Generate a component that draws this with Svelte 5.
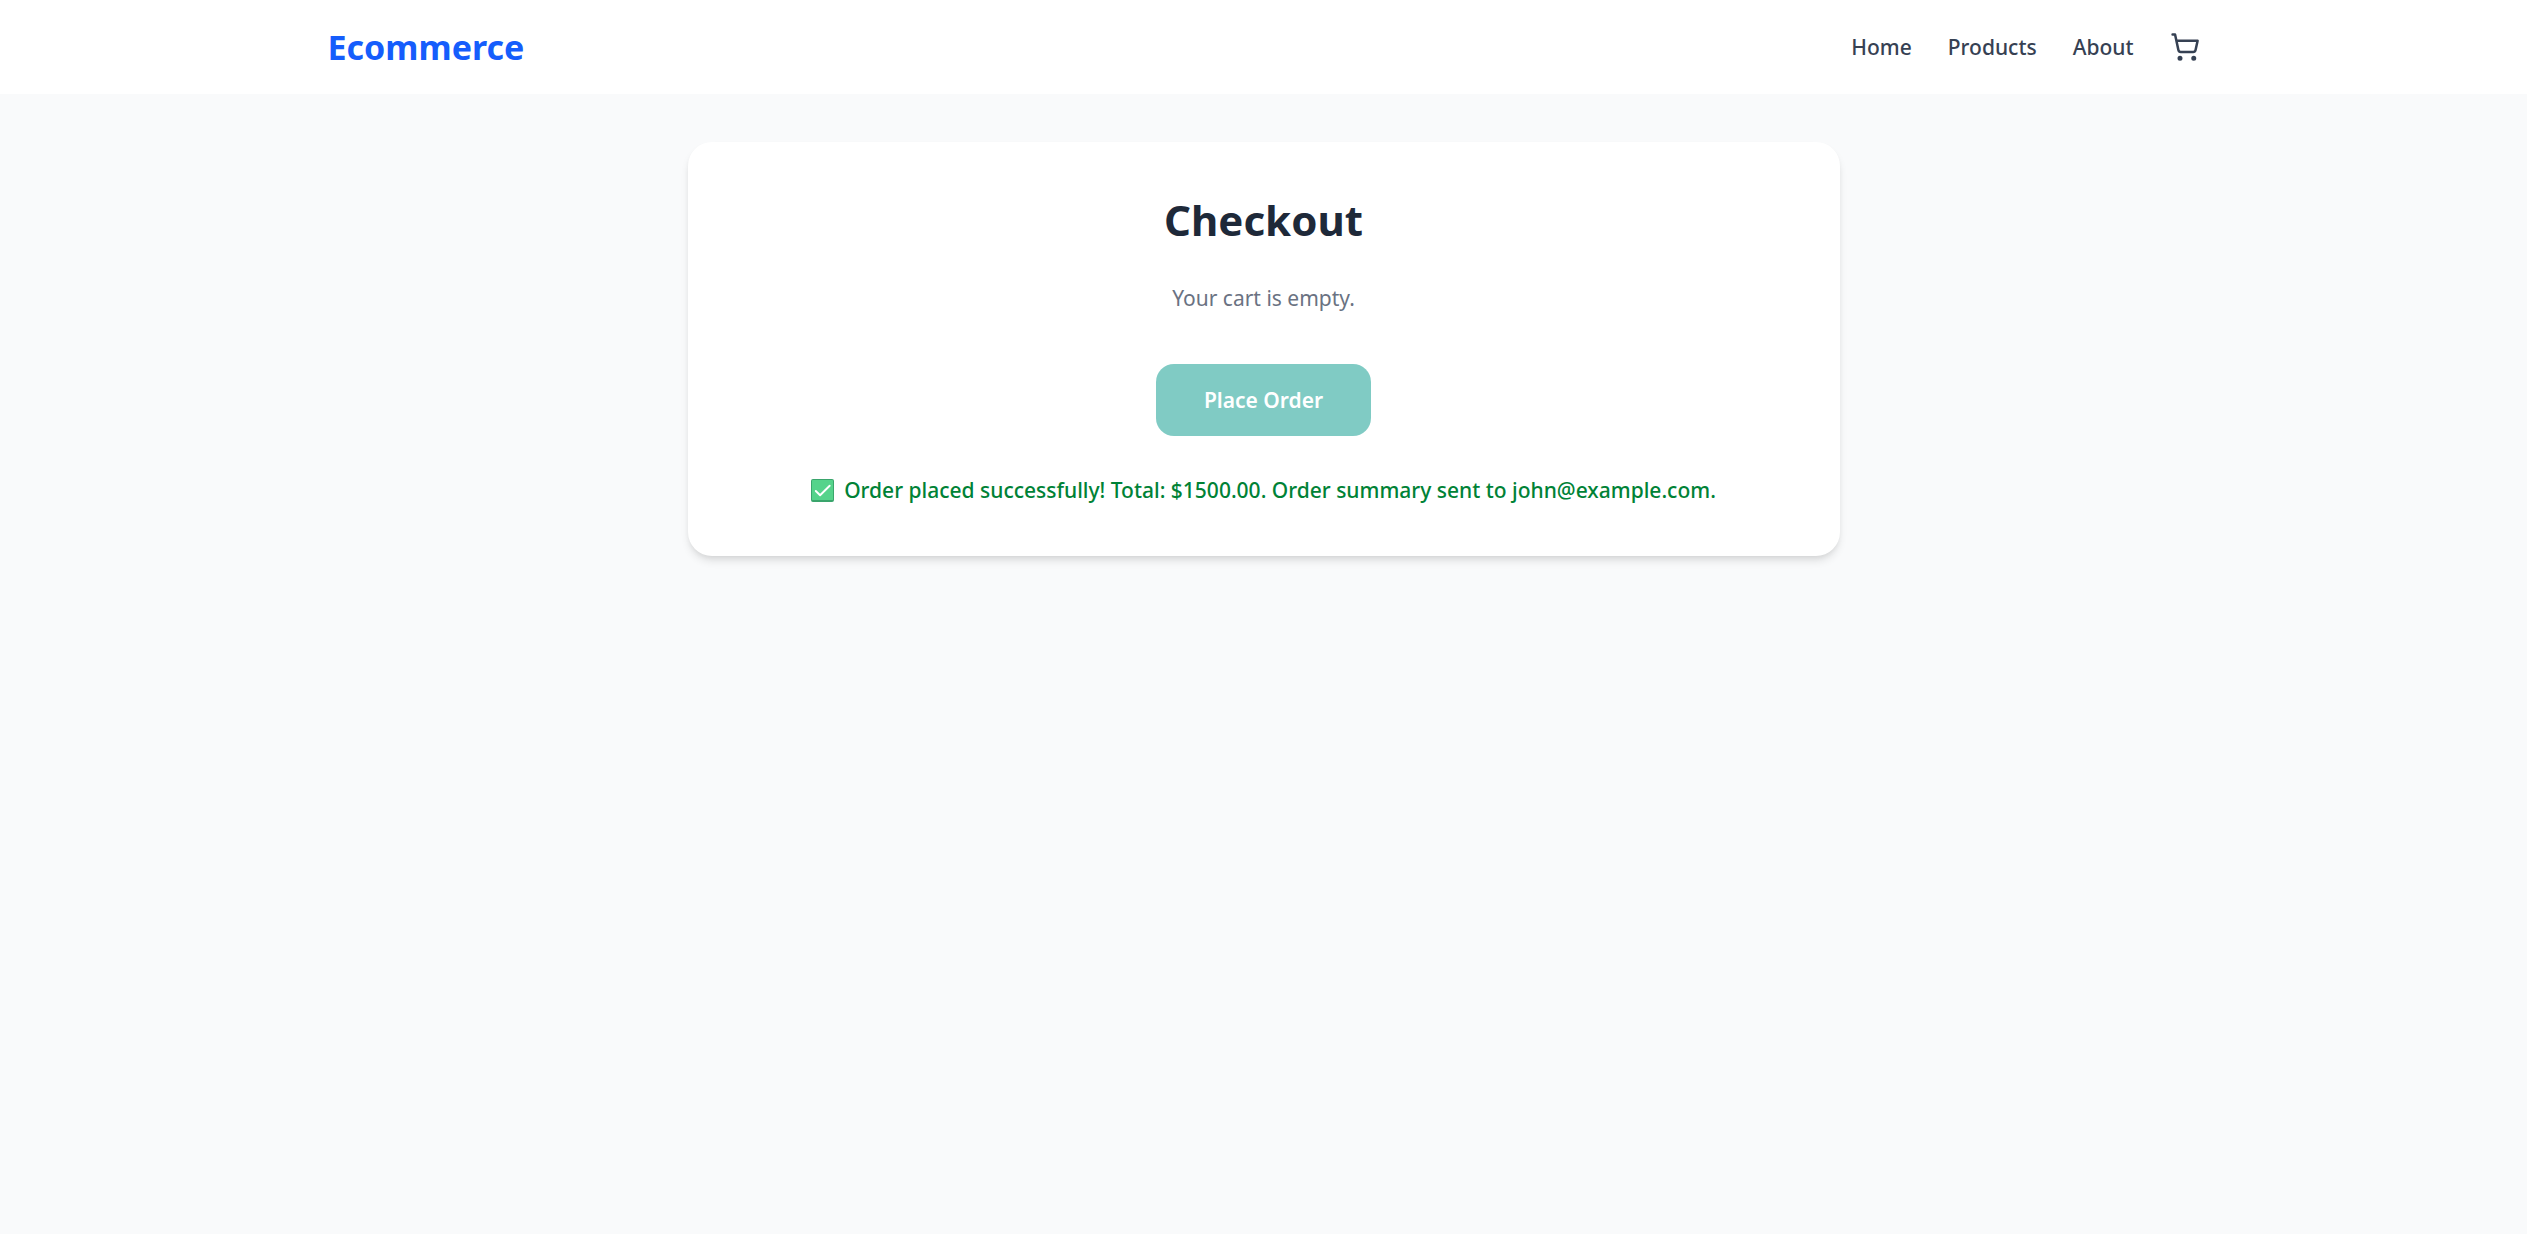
<script>
  const links = [
    { label: 'Home', href: '#home' },
    { label: 'Products', href: '#products' },
    { label: 'About', href: '#about' },
  ];
  const total = 1500;
  const email = 'john@example.com';
</script>

<div class="page">
  <header>
    <div class="bar">
      <a class="logo" href="#home">Ecommerce</a>
      <nav>
        {#each links as link}
          <a href={link.href}>{link.label}</a>
        {/each}
        <a class="cart" href="#cart" aria-label="Cart">
          <svg viewBox="0 0 24 24" fill="none" stroke="currentColor" stroke-width="2" stroke-linecap="round" stroke-linejoin="round">
            <circle cx="8" cy="21" r="1" />
            <circle cx="19" cy="21" r="1" />
            <path d="M2.05 2.05h2l2.66 12.42a2 2 0 0 0 2 1.58h9.78a2 2 0 0 0 1.95-1.57l1.65-7.43H5.12" />
          </svg>
        </a>
      </nav>
    </div>
  </header>

  <main>
    <section class="card">
      <h1>Checkout</h1>
      <p class="empty">Your cart is empty.</p>
      <button type="button">Place Order</button>
      <p class="success" role="status">
        <svg class="check" viewBox="0 0 24 24" aria-hidden="true">
          <rect x="0" y="0" width="24" height="24" rx="2" fill="#3aa56c" />
          <rect x="1" y="1" width="22" height="21" rx="1" fill="#55d38b" />
          <path d="M5 12.500l4.500 4.500L19.500 7" fill="none" stroke="#fff" stroke-width="2" stroke-linecap="round" stroke-linejoin="round" />
        </svg>
        <span>Order placed successfully! Total: ${total.toFixed(2)}. Order summary sent to {email}.</span>
      </p>
    </section>
  </main>
</div>

<style>
  :global(body) {
    background: #f9fafb;
  }

  .page {
    min-height: 100vh;
    background: #f9fafb;
    font-family: 'Segoe UI', 'Noto Sans', 'Open Sans', sans-serif;
    font-size: 21px;
    line-height: 36px;
  }

  header {
    background: #fff;
  }

  .bar {
    display: flex;
    align-items: center;
    justify-content: space-between;
    box-sizing: border-box;
    max-width: 1920px;
    margin: 0 auto;
    padding: 24px;
  }

  a {
    text-decoration: none;
  }

  .logo {
    color: #155dfc;
    font-size: 34px;
    font-weight: 700;
    line-height: 46px;
  }

  nav {
    display: flex;
    align-items: center;
    gap: 36px;
  }

  nav a {
    color: #364153;
    font-weight: 500;
  }

  .cart {
    display: flex;
  }

  .cart svg {
    width: 30px;
    height: 30px;
  }

  main {
    padding: 48px 24px;
  }

  .card {
    display: flex;
    flex-direction: column;
    align-items: center;
    box-sizing: border-box;
    max-width: 1152px;
    margin: 0 auto;
    padding: 48px;
    border-radius: 24px;
    background: #fff;
    box-shadow: 0 6px 9px -1px rgb(0 0 0 / 0.1), 0 3px 6px -3px rgb(0 0 0 / 0.1);
    text-align: center;
  }

  h1 {
    margin: 0 0 30px;
    color: #1e2939;
    font-size: 42px;
    font-weight: 700;
    line-height: 60px;
  }

  p {
    margin: 0;
  }

  .empty {
    color: #6a7282;
  }

  button {
    margin: 48px 0 36px;
    padding: 18px 48px;
    border: 0;
    border-radius: 18px;
    background: #80cbc4;
    color: #fff;
    font: inherit;
    font-weight: 600;
  }

  .success {
    display: flex;
    align-items: center;
    gap: 10px;
    color: #008236;
    font-weight: 500;
  }

  .check {
    flex: none;
    width: 23px;
    height: 23px;
  }
</style>
